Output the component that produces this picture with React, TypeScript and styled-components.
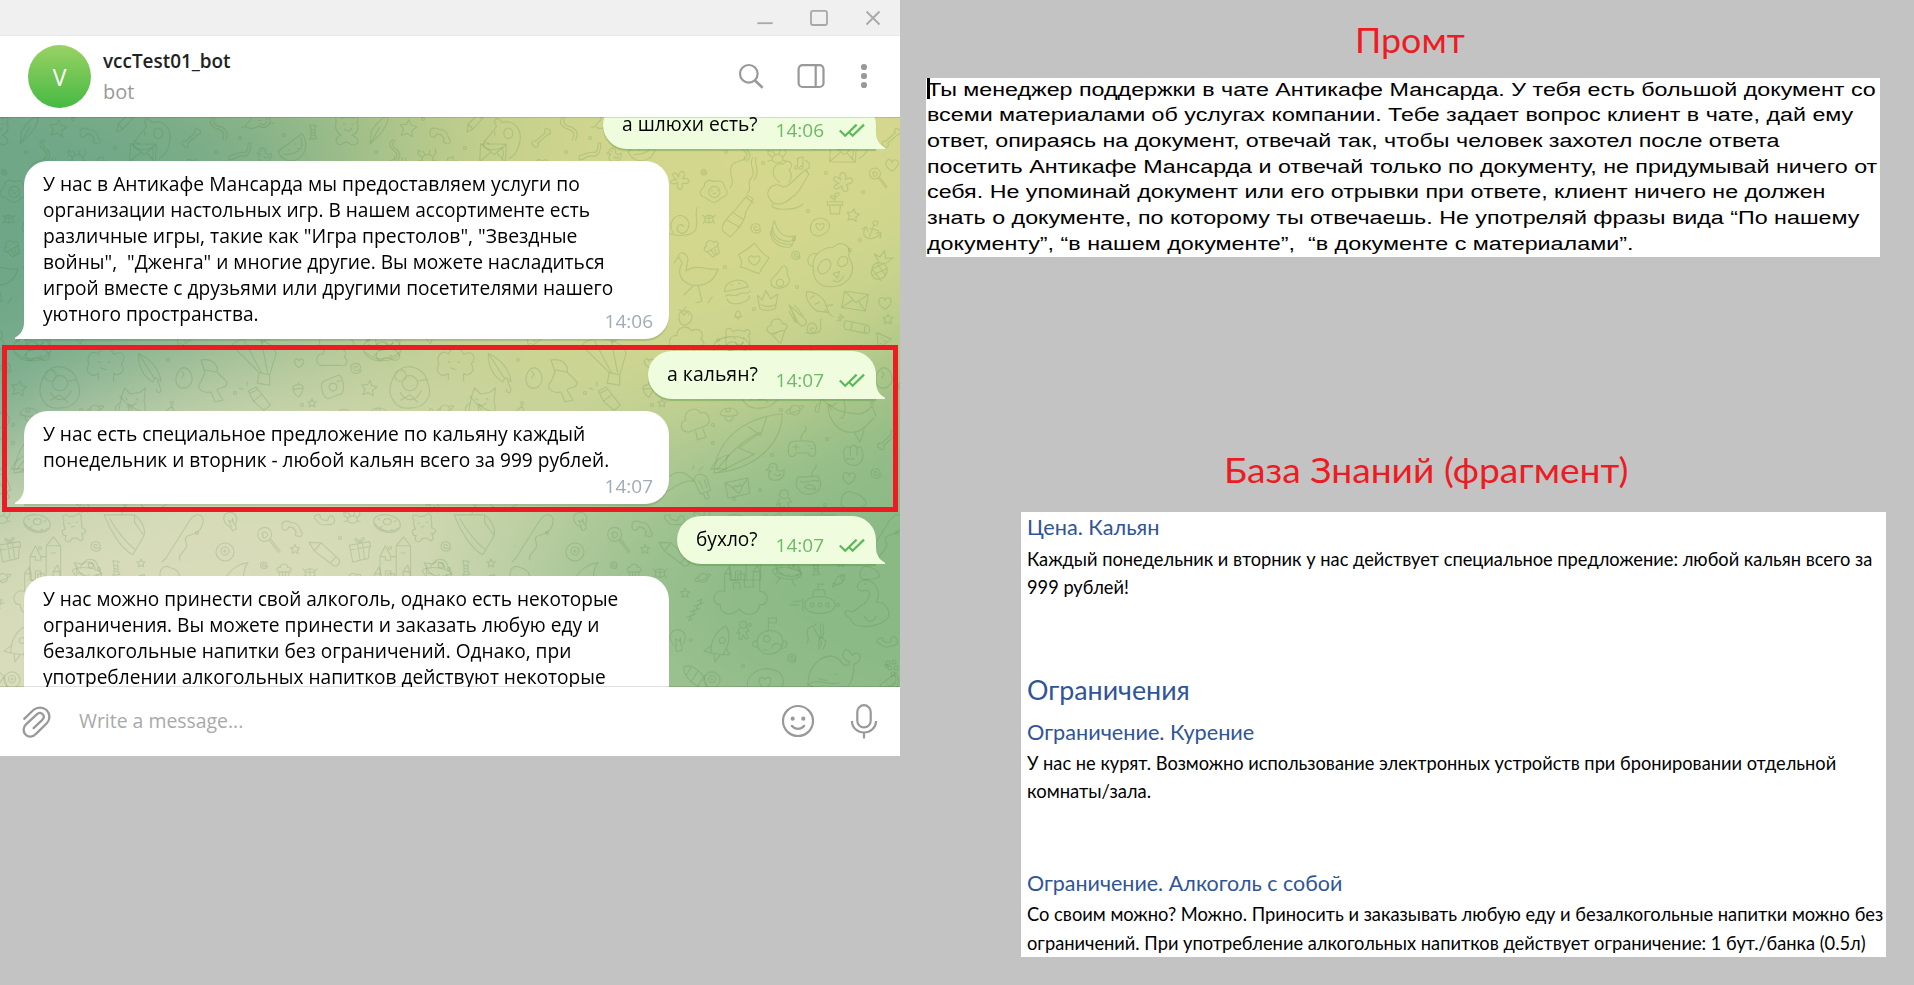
import React, { useEffect, useLayoutEffect, useRef, useState } from "react";
import styled, { createGlobalStyle } from "styled-components";

const GlobalStyle = createGlobalStyle`
  * { box-sizing: border-box; }
  html, body { margin: 0; padding: 0; background: #c3c3c3; }
  body { overflow: hidden; }
  p, h1, h2, h3 { margin: 0; font-weight: 400; }
`;

const UI_FONT = `"Open Sans", "Noto Sans", sans-serif`;
const DOC_FONT = `Lato, "Open Sans", sans-serif`;
const RED = "#ed1c24";

/* ---------- text line stretched to a known width ---------- */

const LineBox = styled.span`
  display: block;
  white-space: pre;
`;
const LineInner = styled.span`
  display: inline-block;
  transform-origin: 0 50%;
`;

function FitLine({ w, children }: { w: number; children: string }) {
  const ref = useRef<HTMLSpanElement>(null);
  const [k, setK] = useState(1);
  useLayoutEffect(() => {
    if (ref.current) setK(w / ref.current.offsetWidth);
  }, [w, children]);
  return (
    <LineBox>
      <LineInner ref={ref} style={{ transform: `scaleX(${k})` }}>
        {children}
      </LineInner>
    </LineBox>
  );
}

/* ---------- page ---------- */

const Board = styled.main`
  display: grid;
  grid-template-columns: 900px 1fr;
  align-items: start;
  width: 1914px;
  height: 985px;
  background: #c3c3c3;
  overflow: hidden;
`;

const Window = styled.section`
  position: relative;
  display: flex;
  flex-direction: column;
  width: 900px;
  height: 756px;
  background: #fff;
  font-family: ${UI_FONT};
  font-size: 20px;
`;

const TitleBar = styled.div`
  display: flex;
  justify-content: flex-end;
  height: 36px;
  background: #f0f0f0;
  border-bottom: 1px solid #e9e9e9;
`;

const Header = styled.header`
  display: flex;
  align-items: center;
  height: 81px;
  padding-left: 28px;
`;

const Avatar = styled.div`
  display: flex;
  align-items: center;
  justify-content: center;
  width: 63px;
  height: 63px;
  border-radius: 50%;
  background: linear-gradient(#9ad164, #46ba43);
  color: #fff;
  font-size: 23px;
  line-height: 30px;
`;

const Who = styled.div`
  flex: 1;
  padding-left: 12px;
`;
const Name = styled.div`
  height: 31px;
  line-height: 26px;
  font-weight: 600;
  font-size: 19.5px;
  color: #222;
`;
const Status = styled.div`
  line-height: 26px;
  color: #999;
`;

/* ---------- chat ---------- */

const Chat = styled.div`
  position: relative;
  height: 570px;
  overflow: hidden;
  &::before, &::after {
    content: "";
    position: absolute;
    z-index: 2;
    left: 0;
    right: 0;
    height: 1px;
    background: rgba(0, 0, 0, 0.12);
  }
  &::before { top: 0; }
  &::after { bottom: 0; }
`;

const Backdrop = styled.div`
  position: absolute;
  inset: 0;
  canvas, svg {
    position: absolute;
    left: 0;
    top: 0;
    width: 900px;
    height: 570px;
  }
`;

const Messages = styled.div`
  position: relative;
  display: flex;
  flex-direction: column;
  gap: 12px;
  margin-top: -16px;
  padding: 0 24px;
`;

const Incoming = styled.div<{ $h: number }>`
  position: relative;
  display: flex;
  flex-direction: column;
  flex-shrink: 0;
  width: 645px;
  height: ${(p) => p.$h}px;
  padding: 10px 16px 0 18.5px;
  background: #fff;
  border-radius: 24px 24px 24px 0;
  box-shadow: 0 2px 1px rgba(70, 110, 70, 0.22);
  color: #000;
  line-height: 26px;
`;

const Outgoing = styled.div<{ $w: number }>`
  position: relative;
  display: flex;
  align-self: flex-end;
  justify-content: space-between;
  flex-shrink: 0;
  width: ${(p) => p.$w}px;
  height: 48px;
  padding: 10px 11px 0 18.5px;
  background: #effdde;
  border-radius: 24px 24px 0 24px;
  box-shadow: 0 2px 1px rgba(80, 150, 60, 0.4);
  color: #000;
  line-height: 26px;
`;

const Meta = styled.div<{ $lift: number }>`
  align-self: flex-end;
  margin-top: ${(p) => p.$lift}px;
  color: #a0acb6;
  font-size: 19px;
  line-height: 24px;
`;

const OutMeta = styled.div`
  display: flex;
  gap: 15px;
  padding-top: 7px;
  color: #6cb968;
  font-size: 19px;
  line-height: 24px;
`;

const TailSvg = styled.svg<{ $side: "left" | "right" }>`
  position: absolute;
  bottom: 0;
  ${(p) => p.$side}: -9px;
  transform: ${(p) => (p.$side === "right" ? "scaleX(-1)" : "none")};
`;

const Tail = ({ side, fill }: { side: "left" | "right"; fill: string }) => (
  <TailSvg $side={side} width="10" height="22" viewBox="0 0 10 22" fill={fill}>
    <path d="M9 0h1v22H0v-1.2C6.500 17 9 12 9 5z" />
  </TailSvg>
);

const Checks = () => (
  <svg width="26" height="24" viewBox="0 0 26 24" fill="none" stroke="#5cb85a" strokeWidth="2.2">
    <path d="M.8 12.500l5.400 5.200L17.600 6.600M10.600 14.800l3 2.900L25 6.600" />
  </svg>
);

const Highlight = styled.div`
  position: absolute;
  z-index: 3;
  left: 2px;
  top: 345px;
  width: 896px;
  height: 167px;
  border: 5px solid ${RED};
`;

const Composer = styled.footer`
  display: flex;
  align-items: center;
  height: 69px;
`;
const Placeholder = styled.div`
  flex: 1;
  padding: 0 0 2px 25px;
  line-height: 26px;
  color: #a9a9a9;
`;

/* ---------- wallpaper ---------- */

const WALL = [
  { rgb: [219, 221, 187], x: 0.35, y: 0.75 },
  { rgb: [107, 165, 135], x: 0.2, y: 0.1 },
  { rgb: [213, 216, 141], x: 0.65, y: 0.25 },
  { rgb: [136, 184, 132], x: 0.8, y: 0.9 },
];

function Gradient() {
  const ref = useRef<HTMLCanvasElement>(null);
  useEffect(() => {
    const c = ref.current!;
    const g = c.getContext("2d")!;
    const W = c.width;
    const H = c.height;
    const img = g.createImageData(W, H);
    for (let j = 0; j < H; j++) {
      for (let i = 0; i < W; i++) {
        const cx = i / W - 0.5;
        const cy = j / H - 0.5;
        const swirl = 0.35 * Math.hypot(cx, cy);
        const t = swirl * swirl * 6.4;
        const px = Math.min(1, Math.max(0, 0.5 + cx * Math.cos(t) - cy * Math.sin(t)));
        const py = Math.min(1, Math.max(0, 0.5 + cx * Math.sin(t) + cy * Math.cos(t)));
        let sum = 0;
        const out = [0, 0, 0];
        WALL.forEach((p) => {
          const d = Math.max(0, 0.9 - Math.hypot(px - p.x, py - p.y)) ** 4;
          sum += d;
          p.rgb.forEach((v, n) => (out[n] += v * d));
        });
        const o = (j * W + i) * 4;
        for (let n = 0; n < 3; n++) img.data[o + n] = out[n] / sum;
        img.data[o + 3] = 255;
      }
    }
    g.putImageData(img, 0, 0);
  }, []);
  return <canvas ref={ref} width={450} height={285} />;
}

/* Doodle outlines, each drawn around 0,0 within roughly 10 units */
const SHAPES: Record<string, string> = {
  star: "M0-9L2.500-3.500 9-2.500 4.500 2 6 8.500 0 5.500-6 8.500-4.500 2-9-2.500-2.500-3.500z",
  dot: "M-2 0a2 2 0 1 0 4 0a2 2 0 1 0-4 0",
  heart: "M0 8C-9 2-9-3-6-6C-3-8 0-6 0-3C0-6 4-8 7-5C9-2 7 3 0 8z",
  spiral: "M7 3C4 10-7 8-7 0C-7-8 5-8 6-1C6 5-3 5-3 0C-3-3 2-3 2 0",
  bone: "M-5 3L4-5C2-9 6-10 7-8C10-8 10-4 6-3L-3 5C-1 9-6 10-7 7C-10 7-9 2-5 3z",
  boomerang: "M-9-1C-10-7-4-7-1-5C4-5 7-2 8 3C11 5 8 10 5 7C2 8 3 4 4 4C2-1-1-1-3-1C-4 3-9 3-9-1z",
  pencil: "M-8 10L-7 2 5-9C8-10 10-7 9-5L-2 7zM-7 2L-2 7M3-7L7-3",
  leaf: "M-5 10L-4 1C0-6 4-9 8-10C8-3 3 3-5 10L2-2",
  dog: "M-10 3C-7-1-5-3-3-6C-6-10-2-12 0-8C6-10 11-5 10 2C9 8 6 11 4 12M-10 3C-12 7-5 8 0 6M1-2a2.500 3 0 1 0 5 0a2.500 3 0 1 0-5 0M-10 2L-7 4M-4-3L-4-1M0 6C1 8 1 10 0 12",
  envelope: "M-9-5L8-7 9 5-8 7zM-9-5L1 1 8-7M-8 7L-2 0M9 5L3 0",
  loveletter: "M-9-6L9-6 8 6-9 6zM-9-6L-3 0M9-6L3 0M0 4C-5 0-3-4 0-1C3-4 5 0 0 4",
  snake: "M-6-10C-10-5-7-1-1 1C6 3 5 7 3 11M-4-10C-6-5-4-2 2-1C9 2 8 7 6 11",
  worm: "M-9 8C-5 9-3 4 2 5C7 6 9 1 9-6M-9 5C-5 4-1 1 4 2C7 2 6-2 7-6L9-6M-9 8V5",
  cat: "M-11-7C-5-3-2 0-6 2C-12 7-3 8 1 5C5 8 11 4 9-1L10-6 6-3C3-4 1-4-1-2L-4-6M1 1l2 0M6 0l2 0M2 3C4 5 6 4 7 2M-8 5L-11 6M9 3l3 0",
  melon: "M-10 3L6-9C11-2 8 7 1 9C-3 10-8 8-10 3zM5-6C8 0 4 5-6 5M-3 2l1 0M1-2l1 0M3 1l1 0",
  candy: "M-4-9L4-8 2-5 3 5 5 8-4 9-2 5-3-5zM-3-4L3-2M-3 0L3 2M-3 3L2 5",
  bear: "M-9-6C-11-11-5-12-4-8C0-10 3-9 5-8C8-12 11-7 8-5C11 1 8 5 4 6C12 9 9 15 4 14C0 11-2 11-5 14C-11 14-10 7-5 6C-10 3-10-1-9-6zM-3-3l1 0M4-3l1 0M-2 1C0 3 3 3 4 0",
  crab: "M-5 2C-3-4 5-4 6 2C5 7-4 7-5 2zM-5 0L-9-3-9-7-6-5M6 0L9-4 8-8M-5 3L-9 4M6 3L9 4M-2-2L-4-6M2-2L3-7",
  duck: "M-9-2L-6-4C-6-10 2-10 2-5C1-1 4 0 9-2C10 7 3 9-2 8C-8 7-7 0-4-1zM-9-2L-5-1M-3-5l1 0M0 2C2 5 4 4 6 2",
  smoke: "M-8 10C-4 4-10 2-7-4C-5-8 2-6 1-10M6-9C3-3 9-1 5 4C2 8 6 10 3 13M8-9C7-4 11-1 7 5",
  lute: "M-9 6C-11 2-7-2-3 0C0 2 3-3 9-8L11-6C7 0 6 4 2 6C-2 10-7 10-9 6zM-4-2C-9-6-7-12-2-11C1-14 4-11 1-8C3-6 2-3 1-2M-7 9C-10 12 4 13 8 9",
  notes: "M-5-5L1-7V4C-2 2-5 7-1 7C2 7 1 4 1 4M-5-5V4C-9 2-9 7-6 7C-4 7-5 4-5 4M4-3l4 3V6C4 5 4 9 6 9",
  flower: "M-2-2C-5-10 4-10 2-2C9-6 11 1 3 2C7 9-1 11-1 3C-7 9-11 3-3 1C-11-1-8-8-2-2z",
  pot: "M-7-2H7V1H-7zM-5 1L-4 9H4L5 1M0-2V-9C4-12 6-9 0-6C-5-10-6-6 0-4",
  lollipop: "M-6-4a5 5 0 1 0 10 0a5 5 0 1 0-10 0M2 0L9 9M3-1L10 8M-3-4C-3-7 2-6 1-3C-1 0-3-2-2-4",
  egg: "M-8 3C-12-2-5-2-6-6C-3-11 0-6 4-8C9-8 7-3 10-1C11 4 6 3 4 6C-1 10-3 4-8 3zM-3 0a4 4 0 1 0 8 0a4 4 0 1 0-8 0M-1-1l.5 0M3-1l.5 0M0 1L2 1",
  bottle: "M-8 8C-10 4-3-1 0-5L5-11 8-9 4-2C4 3-1 8-4 11zM-6 2L1 6M-3-2L3 2M4-10L8-7",
  banana: "M-6-9C-4 1 2 4 9 2C9 7-1 8-6 1C-8-3-8-6-6-9zM-7-6C-10 0-7 9 7 8L8 4M-9-1C-9 6-3 11 5 10L7 8",
  ring: "M-8 1C-8-9 6-10 8-2C9 6-7 13-8 1zM0 3C-5 0-4-5 0-2C4-5 5 0 0 3",
  anchor: "M-1-6a2 2 0 1 0 4 0a2 2 0 1 0-4 0M0-4L-2 6M-7 0C-9 9 0 10 6 3M-9 1L-6-2-4 2M3 2L7 1 7 6M-3-1L5 0",
  bug: "M-6 0C-6-7 6-7 6 0C6 7-6 7-6 0zM0-6V6M-6-1H6M-6-3L-9-5M6-3L9-5M-6 3L-8 6M6 3L8 6",
  cupcake: "M-6 1L-4 8H4L6 1zM-6 1C-10-2-6-5-4-4C-4-9 4-9 4-4C8-5 9-1 6 1M-2 1L-1 8M2 1L1 8",
  pillow: "M-9-3C-5-5-1-8 1-10C3-7 6-3 10-1C8 3 5 6 4 9C-1 8-5 5-8 5C-6 2-8 0-9-3zM1 4C-5 1-3-4 1-1C5-4 6 1 1 4",
  panda: "M-9 1C-10-6-4-9 0-9C4-13 9-9 7-5C12 3 6 9-1 9C-6 9-9 6-9 1zM-9 0C-13-1-12-7-7-6M-7 1C-6-4-1-5-1-1C-2 3-6 5-7 1zM3-4C5-6 8-4 6-1C3 1 1-1 3-4zM0 3L3 2 2 5zM0 6C2 8 4 6 5 4",
  pineapple: "M-5 1C-5-5 5-5 5 1C6 9-6 11-5 1zM-2-4L-6-8-2-7 0-12 2-7 7-9 3-4M-5 2L3 8M-3-3L5 4M5-1L-4 6M2-4L-5 2",
  flamingo: "M-8-9C-11-12-5-14-4-9L-5-3C0-7 7-3 11-4C9 3 3 5-2 4C-9 2-9-3-7-7zM1 4L3 12M-1 4L-6 9M3 12L0 13M8 10L6 13M-9-10L-11-7",
  burger: "M-8-2C-8-10 7-11 8-3zM-8 1C-4-1-2 3 1 1C4-1 6 3 9 0M-7 3C-7 9 8 8 8 3M-3-6l1 0M2-6l1 0",
  avocado: "M4-10C8-8 4-3 8 1C8 8-3 11-7 6C-10 0-3-1 0-7C1-9 2-10 4-10zM-3 4a3 3 0 1 0 6 0a3 3 0 1 0-6 0",
  crown: "M-8-4L-4 0-1-8 3-1 9-5 7 7C2 9-3 9-6 7zM-5 4C-1 6 3 6 7 4",
  carrot: "M9 8L0 7C-6 3-9-3-8-8C-2-8 6-4 7 3zM7 3L12 2M6 6L12 11M-5-3L-2-5M-2 2L2 0",
  comet: "M-10-10L5 3C8 8 2 11-1 7zM-10-10L-4 4-1 7M-5-10L3 0M-10-4L-4 6",
  berry: "M-6-1C-7-8 6-8 7-1C8 4 2 9-2 8C-5 7-6 3-6-1zM-4-5L-1-2 2-6 4-2M-6-7L-2-6 1-10",
  bell: "M-6 3C-3 1-5-6 0-7C5-6 3 1 6 3zM-2 3C-2 7 2 7 2 3M-6 3L6 3",
  icecream: "M-5 2L1 11 6 1M-5 2C-10-1-6-5-4-4C-4-10 5-10 5-4C9-4 9 0 6 1zM-3 3L3 1",
  snail: "M-8 6C-3 8 5 8 8 4C10-1 7-6 9-9M-5 6C-9 0-4-6 1-4C7 0 3 7-1 6C-5 3-1-1 1 2",
  cracker: "M-8-3L6 0C9 0 9 6 6 6L-9 3C-11 1-10-3-8-3M-4-2L-5 3M-10-5L-13-8M-12-3L-15-3M6 0C4 2 4 5 6 6",
  cloud: "M-9 6C-14 3-11-3-7-2C-7-8 0-9 2-5C7-8 11-3 8 0C12 3 9 7 6 6z",
  pizza: "M-7-8L9-1-5 9zM-5-8C-2-5 4-4 9-1M-2-2l1 0M1 1l1 0M-3 4l1 0",
  sheep: "M-9 0C-11-5-6-8-4-5C-3-9 3-9 4-5C9-8 11-3 8 0C11 4 6 7 4 5L4 9M-4 8V5C-9 8-11 3-9 0M-4-1l1 0M1-1l1 0M-3 2L0 3",
  umbrella: "M-9-9C-2-7 6-2 8 6L4 4 3 7C-3 5-8-1-9-9zM6 6L9 11C9 14 6 13 6 11M-9-9L3 4",
  oval: "M-7 1C-7-5-3-9 0-9C5-8 7-3 7 2C6 7 2 9-1 9C-5 8-7 5-7 1zM-2-6L0-3-2 0",
  squirrel: "M-6-10C0-11 3-7 2-4L7 1C7 5 3 3 2 5L5 10 1 11-1 6C-6 7-9 3-6 1L-4-4zM-4-5L2-4",
  balloon: "M-11-7C-6-13 9-10 10-3L7 7 2 6-11-7M-5-9L3 6M3-9L6 6M2 6L1 11 7 12 7 7",
  torch: "M-9-7L-3-10 1-5 8 4 3 8-5 1zM-8-5L-2-8M-5 1L1-4M-10-11l0-3M-13-8l-3-1",
  acorn: "M-6-1C-6-7 6-8 6-2zM-5-1C-5 6 1 8 1 8C4 4 6 2 5-2M0-6L1-9",
  fox: "M-9 8L-7-2-5-8-1-4 5-5 9-8 8 1C10 6 8 10 7 12M-4-1L-3 0M3-1L4 0M-2 3L0 4 3 2M-9 8C-12 9-12 4-8 2",
  parrot: "M-10 5C-12-1-8-8-4-10C1-12 8-9 9-3C13 5 7 11 1 11C-6 12-8 9-10 5zM-4-2a4 4 0 1 0 8 0a4 4 0 1 0-8 0M-8-6a3 3 0 1 0 6 0a3 3 0 1 0-6 0M4-3L9-4M-5 3C-2 8 3 8 6 2M-5 7L0 4 4 8",
  camera: "M-8-4L4-9C8-9 9 2 7 5L-4 9C-8 8-10-1-8-4zM-3 0a3 3 0 1 0 6 0a3 3 0 1 0-6 0M3-4l3-1",
  donut: "M-10 0C-10-7 9-9 10 0C11 8-9 10-10 0zM-3-1C-2-4 3-4 3-1C2 2-3 2-3-1M-7-2l1 1M6-3l-1 1M-4 4l1-1M4 4l1 0M-9 2C-4 7 5 7 9 2",
  tree: "M-2 5L-3 11H3L3 5M-7 4C-13 1-9-5-6-4C-6-11 5-11 5-5C10-6 11 2 6 4z",
  mushroom: "M-9-1C-8-9 8-9 9-1C6 2-6 2-9-1zM-4 1C-5 8 5 8 4 1M-3-5a2 2 0 1 0 4 0a2 2 0 1 0-4 0",
  surf: "M-11 9C-10-2-1-9 11-10C11-1 3 8-11 9zM-10 8C-5 1 1-3 4-4M6-9L4-3 0-6M4-4L-3 1 2 3-10 9",
  gamepad: "M-9 1C-9-5-5-4 0-4C5-4 9-5 9 1C10 9 5 6 4 4H-4C-5 7-10 8-9 1zM-6 0h4M-4-2v4M4-1l1 0M6 1l1 0M0-4C-3-9 5-10 2-14",
  narwhal: "M-10-9C-10 0-4 6 3 5C8 5 10 0 13-2M-10-9C-4-4 0-5 5-4C8-4 10-6 12-8M-8-6L-14-13M3 5L6 10 8 4M-4-2l1 0M12-8L14-3",
  fist: "M-7-4C-5-8-3-7-2-5C-1-9 2-8 3-5C5-8 7-6 7-3C9 2 6 8 1 8C-5 8-8 4-7-4zM-2-5V0M3-5V0M-5 3H1",
  pop: "M-7-4C-6-10 1-9 3-5L6 4-2 7zM0 6L2 11 5 10 3 5M-3-3L0 3M1-4L3 2M-8-12l1-3M-3-11l3-3",
  bowl: "M-8-4C-12 3-5 9 1 8C9 7 10 0 6-5zM-6-1C0 1 4-4 7-1M-3 3C0-1 4 2 5 5C2 3 0 6-3 3zM2-5C1-10 6-9 5-13",
  hat: "M-9 4C-6 7 7 6 9 3C8-1 4-4 0-5C-5-8-10-4-9 4z",
  astro: "M-4-7a4 4 0 1 0 8 0a4 4 0 1 0-8 0M-4-3L-7 3-3 1-5 9-1 9 0 4 3 9 6 8 3 1 7 0 4-4",
  dolphin: "M-10 4C-7-3 0-8 7-4C9-2 11-1 12 1C7 0 4 2 0 4C-3 5-6 9-10 8C-8 5-13 4-10 4z",
  teddy: "M-6-7C-9-11-3-12-2-9H3C5-12 9-9 7-6C8-2 6 0 7 1C11 3 9 6 6 5C8 11 4 12 2 8H-2C-5 12-9 9-6 5C-9 5-10 0-6 0C-7-3-7-5-6-7zM-3-4l1 0M3-4l1 0M-1-1L1-1",
  gift: "M-9-4L8-7 9-3-8 0zM-8 0L-6 10 7 7 8-3M-2-5L0 8M2-6L4 8M0-6C-7-8-4-12 0-7C2-13 7-10 0-6",
  castle: "M-10 10V-3H-7V-1H-4V-3H-1V10M-1 2V-9L3-14 7-9V10M-1-9H7M-10-3L-7-9-4-3M-7 10V5H-4V10M2-5h2M-10 10H7",
  boat: "M-12-9L4-9C7-7 10-2 9 2L3 12C-3 9-9-1-12-9zM-9-7C-5 0-1 5 4 9M9 2L4-5 4-9M-3-9L-1-13 6-11",
  rod: "M-8 12L4-7C8-12 12-9 10-4C8 2 0-1 2 4C4 8-3 10-1 13M-8 12L-10 14",
  ball: "M-9 0a9 9 0 1 0 18 0a9 9 0 1 0-18 0M-4-1a4 4 0 1 0 8 0a4 4 0 1 0-8 0M0-2a1 1 0 1 0 1 1",
  bulb: "M-2 5C-8 0-7-8 0-8C7-7 7 0 3 4L3 8-1 9zM-1 5L-2-1 1 1 2-2 2 4",
  rocket: "M-4 8C-7 0-4-8 1-12C6-7 6 0 4 7zM-1-2a2 2 0 1 0 4 0a2 2 0 1 0-4 0M-5 3L-9 8-4 8M5 2L8 6 4 7M-2 8L0 13 2 8",
  ship: "M-10-4L-3-3C0-9 7-7 8-2L11 4C5 8-3 7-6 3zM1-2a2 2 0 1 0 4 0a2 2 0 1 0-4 0M-8-2L-8 4-5 4",
  sail: "M-10 8C-6 0 1-7 10-8C6-3 6 3 7 9C1 7-4 7-10 8z",
  saturn: "M-5 0a5 5 0 1 0 10 0a5 5 0 1 0-10 0M-4-2C-12 2-10 6 0 2C8-1 12-5 5-4",
  fort: "M-9 3C-14 3-12-5-7-3V-11H-4V-8H-1V-11H2V-5H6V-12H9V-3C14-3 13 4 9 3C8 9 1 8 0 5C-5 9-9 7-9 3zM-7-11L-5-14-4-11M6-12L8-15 9-12M-3-4V-7H0V-4",
  ufo: "M-10 0C-7-4 6-5 10-1C8 5-7 6-10 0zM-5-2C-5-9 4-9 5-3M-4 4L-6 8M4 4L7 8M-4 1l1 0M1 1l1 0M6 0l1 0",
  sub: "M-7 0C-7-6 9-6 9 0C9 6-7 6-7 0zM-8-3V3M-3-4L-2-8H3L4-5M0-8V-11H3M-4 0a1 1 0 1 0 2 0a1 1 0 1 0-2 0M0 0a1 1 0 1 0 2 0a1 1 0 1 0-2 0M4 0a1 1 0 1 0 2 0a1 1 0 1 0-2 0M-10 0H-15M-9-2H-13",
  nessie: "M-1-1C2-4 3-7 0-8C-5-6-6-12-1-13C5-13 8-6 5-2C11-2 13 4 10 7C3 12-7 11-8 6C-12 4-11 1-7 3C-4 2-4 0-1-1zM-1-11l1 0M-1 5C1 9 4 8 5 5",
  fish: "M-5 5C-7-1-1-6 5-6C6 0 2 5-4 5L-8 8-8 3-5 5M3-4l.5 0M0-5L3 1",
  zzz: "M-8 8L-3 6-6 12-2 10M-4 2L1 0-2 6 2 4M0-4L5-6 2 0 7-2M4-10L9-12 6-6 11-8",
  planet: "M-8 1C-9-9 7-10 8-1C9 9-7 11-8 1zM-8-1C-13 0-11 4-8 3M8-1C12 0 11 4 7 4M-4-2a2 2 0 1 0 4 0a2 2 0 1 0-4 0M1 4C2-1 7 1 7 3M-4 5l2 0M-1-8V-15H4V-12H-1",
  whale: "M-12 8C-12-2-3-9 3-4C5-1 7 0 8-3C4-4 4-7 6-9C8-8 9-7 9-6C11-8 13-7 13-5C13-3 11-2 10-2C10 6 7 10 4 12M-12 8C-7 4-3 9 3 7M-12 8C-7 10-4 12-3 14M-7 5L-3 6M1 3l1 0M-7-9C-3-13-8-15-9-19M-5-9C-2-12-4-14-6-15",
  bee: "M-9-7C-3-10 7-3 8 8C1 9-9 0-9-7zM-3-8L-7-1M2-5L-4 4M6-1L1 7",
  cone: "M-9 4C-11-4-1-9 7-5C12-1 9 7 3 8C-3 6-6 6-9 4zM0 4C-5 1-3-4 0-1C3-4 5 1 0 4",
  grapes: "M-6-5a2 2 0 1 0 4 0a2 2 0 1 0-4 0M0-6a2 2 0 1 0 4 0a2 2 0 1 0-4 0M-4 0a2 2 0 1 0 4 0a2 2 0 1 0-4 0M2 0a2 2 0 1 0 4 0a2 2 0 1 0-4 0M-1 6a2 2 0 1 0 4 0a2 2 0 1 0-4 0",
};

/* shape, x, y, scale, rotation */
type Doodle = [string, number, number, number?, number?];
const DOODLES: Doodle[] = [
  ["bear", -3, 128, 1.2], ["leaf", 27, 130, 1.4], ["star", 58, 128, 0.95, 8], ["boomerang", 90, 135, 1.1], ["pencil", 125, 122, 1],
  ["dog", 152, 137, 1.8], ["bone", 191, 138, 1.05], ["snake", 219, 128, 1.1], ["cat", 257, 119, 1.4], ["melon", 293, 147, 1.5],
  ["candy", 313, 132, 0.8], ["snake", 45, 150, 0.9, 20], ["crab", 77, 157, 1], ["envelope", 143, 153, 1.5, 8], ["worm", 240, 150, 1.2],
  ["duck", 264, 155, 0.8], ["smoke", 43, 172, 1.6], ["lute", 87, 186, 2], ["notes", 102, 163, 0.9], ["flower", 143, 182, 1.2],
  ["pot", 135, 204, 1.1], ["lollipop", 176, 178, 1.1], ["heart", 192, 165, 0.8], ["flower", 330, 180, 1.1, 20], ["spiral", 4, 172, 0.4],
  ["egg", 13, 192, 1.4], ["bottle", 38, 216, 1.9], ["star", 153, 215, 0.7, 10], ["banana", 83, 233, 1.4], ["ring", 120, 227, 1.2],
  ["anchor", 173, 230, 1.2, 10], ["spiral", 56, 228, 0.7], ["bug", 9, 219, 0.7], ["snail", 332, 223, 1.7], ["cupcake", 12, 248, 1, -30],
  ["pillow", 53, 259, 1.6], ["spiral", 96, 255, 0.6], ["panda", 133, 267, 2.2], ["pineapple", 180, 268, 1.5, 15], ["flamingo", 346, 277, 2],
  ["burger", 37, 293, 1.5, -8], ["avocado", 80, 278, 1.2], ["crown", 67, 300, 1.2], ["carrot", 117, 302, 1.3], ["comet", 100, 316, 1.1],
  ["envelope", 155, 301, 1.4, 15], ["heart", 185, 303, 0.8], ["star", 188, 319, 0.55], ["berry", 335, 317, 1], ["bell", 38, 315, 0.6],
  ["icecream", 77, 330, 1.3, -10], ["snail", 113, 327, 0.9], ["cracker", 158, 325, 1.4], ["bear", 38, 342, 1.3], ["cloud", 338, 339, 1.6],
  ["pizza", 183, 340, 0.9], ["bone", 210, 330, 1], ["star", 240, 325, 0.8], ["fish", 270, 335, 1], ["donut", 32, 348, 1.9],
  ["sheep", 106, 364, 1.9], ["umbrella", 150, 370, 1.6, 10], ["oval", 184, 378, 1.15], ["squirrel", 213, 380, 2], ["balloon", 255, 360, 2.1],
  ["torch", 260, 400, 1.3], ["acorn", 298, 390, 0.9], ["fox", 132, 400, 1.5], ["star", 19, 388, 0.85, 8], ["parrot", 60, 387, 1.9],
  ["camera", 333, 387, 1.3], ["spiral", 6, 368, 0.75], ["star", 312, 403, 0.45], ["heart", 299, 363, 0.6], ["cloud", 333, 357, 1.4],
  ["saturn", 95, 410, 1], ["mushroom", 29, 415, 1], ["tree", 346, 423, 1.5, -20], ["surf", 48, 445, 3.1], ["gamepad", 102, 447, 1.5],
  ["narwhal", 148, 422, 2], ["bone", 187, 440, 1.1], ["fist", 153, 455, 1.3], ["duck", 75, 472, 1], ["pop", 3, 485, 1.3],
  ["loveletter", 38, 488, 1.3, -12], ["bowl", 109, 483, 1.4], ["heart", 149, 478, 0.8], ["spiral", 176, 473, 0.7], ["astro", 84, 502, 1.1],
  ["hat", 154, 500, 1.4], ["dolphin", 327, 480, 1.4], ["sail", 20, 462, 0.9], ["donut", 37, 523, 1.35, 12],
  ["teddy", 73, 528, 1.3, -8], ["gift", 10, 550, 1.2], ["castle", 48, 562, 1.8], ["spiral", 96, 546, 0.7], ["boat", 127, 532, 1.9],
  ["rod", 182, 534, 2], ["ball", 225, 552, 1], ["bulb", 231, 521, 1.1, -15], ["lollipop", 266, 540, 1.4], ["star", 295, 549, 0.5],
  ["boomerang", 292, 528, 1.1], ["boomerang", 325, 520, 1, 160], ["pencil", 325, 553, 1.5, 85], ["crab", 352, 518, 0.9], ["ship", 87, 568, 1.3],
  ["candy", 116, 568, 0.8], ["star", 141, 563, 0.45], ["cupcake", 284, 571, 0.9], ["sail", 235, 573, 1.3], ["spiral", 264, 565, 0.5],
  ["hat", 170, 573, 1.1], ["bug", 310, 573, 0.8], ["saturn", 3, 578, 0.9], ["fort", 40, 598, 2.2], ["ufo", 87, 573, 1.5, 10],
  ["sub", 118, 605, 1.9], ["nessie", 166, 606, 2], ["fish", 140, 580, 0.9], ["star", 335, 593, 0.5], ["zzz", 344, 610, 0.9],
  ["rocket", 20, 643, 1.5, 15], ["astro", 43, 631, 0.9], ["planet", 70, 642, 1.6], ["smoke", 115, 633, 1], ["whale", 133, 668, 2.1],
  ["spiral", 92, 658, 0.6], ["bee", 346, 677, 1.4], ["cone", 65, 681, 1.9], ["boomerang", 188, 642, 1, 150], ["grapes", 192, 668, 1],
  ["melon", 190, 682, 1], ["bulb", 328, 640, 1.3], ["ball", 12, 680, 0.9],
  ...([[73, 119], [115, 148], [26, 152], [216, 152], [240, 138], [284, 135], [126, 173], [163, 192], [63, 163], [108, 211], [160, 240],
    [94, 239], [25, 267], [97, 287], [150, 250], [54, 309], [140, 318], [18, 340], [168, 360], [172, 403], [235, 393], [302, 405], [127, 439],
    [81, 410], [13, 425], [72, 455], [60, 490], [34, 499], [125, 505], [197, 533], [40, 548], [50, 625], [138, 605], [99, 569], [341, 640],
    [43, 666], [186, 666], [340, 538], [13, 443]] as [number, number][]).map(([x, y]): Doodle => ["dot", x, y, 0.75]),
];

const Wallpaper = () => (
  <Backdrop aria-hidden>
    <Gradient />
    <svg viewBox="0 117 900 570" fill="none" stroke="#3c6e2d" strokeOpacity=".17" strokeWidth="1.1" strokeLinecap="round" strokeLinejoin="round">
      {[-350, 0, 350, 700].map((dx) =>
        DOODLES.map(([name, x, y, s = 1, r = 0], i) => (
          <path
            key={`${dx}-${i}`}
            d={SHAPES[name]}
            vectorEffect="non-scaling-stroke"
            transform={`translate(${x + dx} ${y}) rotate(${r}) scale(${s})`}
          />
        ))
      )}
    </svg>
  </Backdrop>
);

/* ---------- icons ---------- */

const WindowButtons = () => (
  <svg width="150" height="35" viewBox="750 0 150 35" fill="none" stroke="#a8a8a8" strokeWidth="1.8">
    <path d="M757.300 23.200h15.400" />
    <rect x="811" y="10.800" width="16" height="14.200" rx="2" />
    <path d="M866.500 11.500l13 13M879.500 11.500l-13 13" />
  </svg>
);

const HeaderIcons = () => (
  <svg width="170" height="81" viewBox="730 36 170 81" fill="none" stroke="#999" strokeWidth="2.200">
    <circle cx="748.800" cy="73.800" r="8.800" />
    <path d="M755 80.500l7.600 7.200" strokeWidth="2.600" />
    <rect x="798.600" y="65.200" width="24.900" height="21.800" rx="4" />
    <path d="M815.700 65.500v21.500" />
    <g fill="#999" stroke="none">
      <circle cx="864" cy="67" r="3.100" />
      <circle cx="864" cy="76" r="3.100" />
      <circle cx="864" cy="85" r="3.100" />
    </g>
  </svg>
);

const ClipIcon = () => (
  <svg width="54" height="69" viewBox="0 687 54 69" fill="none" stroke="#999" strokeWidth="2.300" strokeLinecap="round" strokeLinejoin="round">
    <path d="M24.200 718.800L33.400 710C37 706.700 43 706.700 46.500 710C50.300 713.700 50.300 719.500 47 723L36.300 733.600C33 737.500 28.500 737.500 25.700 734.700C22.800 732 22.900 727.500 26 724.300L36.800 714.300C38.800 712.500 41.300 712.700 42.700 714.200C44.200 715.800 44 718 42.300 719.800L33.600 728.200" />
  </svg>
);

const InputIcons = () => (
  <svg width="120" height="69" viewBox="780 687 120 69" fill="none" stroke="#999" strokeWidth="2.200">
    <circle cx="798" cy="721" r="15" />
    <g fill="#999" stroke="none">
      <circle cx="792.700" cy="718.700" r="2.100" />
      <circle cx="803.300" cy="718.700" r="2.100" />
    </g>
    <path d="M791.800 725.800C795 729.800 801 729.800 804.200 725.800" strokeLinecap="round" />
    <rect x="857.300" y="705.200" width="13.400" height="22.200" rx="6.700" />
    <path d="M852 721v.5a12 11 0 0 0 24 0V721M864 732.500v6" />
  </svg>
);

/* ---------- right side ---------- */

const Notes = styled.section`
  display: flex;
  flex-direction: column;
  padding: 20px 0 0 26px;
`;

const Title = styled.h1<{ $left: number; $gap?: number }>`
  height: 40px;
  margin: ${(p) => p.$gap ?? 0}px 0 0 ${(p) => p.$left}px;
  font: 34.5px/40px ${DOC_FONT};
  color: ${RED};
`;

const PromptPanel = styled.div`
  position: relative;
  display: flex;
  flex-direction: column;
  width: 954px;
  height: 179px;
  margin-top: 18px;
  padding-left: 1px;
  background: #fff;
`;
const PromptText = styled.p`
  margin-top: -1.200px;
  font: 18.8px/25.65px "Liberation Sans", Arial, sans-serif;
  color: #000;
`;
const Caret = styled.i`
  position: absolute;
  left: 1px;
  top: 0;
  width: 2.500px;
  height: 21px;
  background: #000;
`;

const DocPanel = styled.article`
  width: 865px;
  height: 445px;
  margin: 22px 0 0 95px;
  padding: 1px 0 0 5.500px;
  background: #fff;
  font-family: ${DOC_FONT};
`;
const DocHeading = styled.h2<{ $gap?: number }>`
  margin-top: ${(p) => p.$gap ?? 0}px;
  font-size: 26.4px;
  line-height: 36px;
  color: #2f5597;
`;
const DocSub = styled.h3<{ $gap?: number }>`
  margin-top: ${(p) => p.$gap ?? 0}px;
  font-size: 21.2px;
  line-height: 28px;
  color: #2f5597;
`;
const DocText = styled.p<{ $gap: number }>`
  margin-top: ${(p) => p.$gap}px;
  font-size: 18.6px;
  line-height: 28.3px;
  color: #000;
`;

type Line = [string, number];
const Lines = ({ items }: { items: Line[] }) => (
  <>
    {items.map(([text, w]) => (
      <FitLine key={text} w={w}>
        {text}
      </FitLine>
    ))}
  </>
);

const GAMES: Line[] = [
  ["У нас в Антикафе Мансарда мы предоставляем услуги по", 537],
  ["организации настольных игр. В нашем ассортименте есть", 547],
  ['различные игры, такие как "Игра престолов", "Звездные', 534],
  ['войны",  "Дженга" и многие другие. Вы можете насладиться', 562],
  ["игрой вместе с друзьями или другими посетителями нашего", 570],
  ["уютного пространства.", 215.5],
];
const HOOKAH: Line[] = [
  ["У нас есть специальное предложение по кальяну каждый", 542.5],
  ["понедельник и вторник - любой кальян всего за 999 рублей.", 566.5],
];
const DRINKS: Line[] = [
  ["У нас можно принести свой алкоголь, однако есть некоторые", 575],
  ["ограничения. Вы можете принести и заказать любую еду и", 556],
  ["безалкогольные напитки без ограничений. Однако, при", 528.5],
  ["употреблении алкогольных напитков действуют некоторые", 563],
];
const PROMPT: Line[] = [
  ["Ты менеджер поддержки в чате Антикафе Мансарда. У тебя есть большой документ со", 948.5],
  ["всеми материалами об услугах компании. Тебе задает вопрос клиент в чате, дай ему", 926],
  ["ответ, опираясь на документ, отвечай так, чтобы человек захотел после ответа", 852],
  ["посетить Антикафе Мансарда и отвечай только по документу, не придумывай ничего от", 950.5],
  ["себя. Не упоминай документ или его отрывки при ответе, клиент ничего не должен", 898],
  ["знать о документе, по которому ты отвечаешь. Не употреляй фразы вида “По нашему", 932.5],
  ["документу”, “в нашем документе”,  “в документе с материалами”.", 706],
];

const Sent = ({ w, text, tw, time }: { w: number; text: string; tw: number; time: string }) => (
  <Outgoing $w={w}>
    <FitLine w={tw}>{text}</FitLine>
    <OutMeta>
      <span>{time}</span>
      <Checks />
    </OutMeta>
    <Tail side="right" fill="#effdde" />
  </Outgoing>
);

export default function App() {
  return (
    <Board>
      <GlobalStyle />
      <Window>
        <TitleBar>
          <WindowButtons />
        </TitleBar>
        <Header>
          <Avatar>V</Avatar>
          <Who>
            <Name>
              <FitLine w={128}>vccTest01_bot</FitLine>
            </Name>
            <Status>bot</Status>
          </Who>
          <HeaderIcons />
        </Header>
        <Chat>
          <Wallpaper />
          <Messages>
            <Sent w={273} text="а шлюхи есть?" tw={135.5} time="14:06" />
            <Incoming $h={178}>
              <Lines items={GAMES} />
              <Meta $lift={-18.4}>14:06</Meta>
              <Tail side="left" fill="#fff" />
            </Incoming>
            <Sent w={228} text="а кальян?" tw={90.5} time="14:07" />
            <Incoming $h={93}>
              <Lines items={HOOKAH} />
              <Meta $lift={0.6}>14:07</Meta>
              <Tail side="left" fill="#fff" />
            </Incoming>
            <Sent w={199} text="бухло?" tw={62} time="14:07" />
            <Incoming $h={178}>
              <Lines items={DRINKS} />
            </Incoming>
          </Messages>
        </Chat>
        <Composer>
          <ClipIcon />
          <Placeholder>
            <FitLine w={164}>Write a message...</FitLine>
          </Placeholder>
          <InputIcons />
        </Composer>
        <Highlight />
      </Window>

      <Notes>
        <Title $left={429}>
          <FitLine w={110}>Промт</FitLine>
        </Title>
        <PromptPanel>
          <PromptText>
            <Lines items={PROMPT} />
          </PromptText>
          <Caret />
        </PromptPanel>
        <Title $left={298} $gap={193}>
          <FitLine w={404.5}>База Знаний (фрагмент)</FitLine>
        </Title>
        <DocPanel>
          <DocSub>
            <FitLine w={132}>Цена. Кальян</FitLine>
          </DocSub>
          <DocText $gap={3.5}>
            <Lines
              items={[
                ["Каждый понедельник и вторник у нас действует специальное предложение: любой кальян всего за", 845.5],
                ["999 рублей!", 102],
              ]}
            />
          </DocText>
          <DocHeading $gap={71.4}>
            <FitLine w={162.5}>Ограничения</FitLine>
          </DocHeading>
          <DocSub $gap={9.5}>
            <FitLine w={227}>Ограничение. Курение</FitLine>
          </DocSub>
          <DocText $gap={3}>
            <Lines
              items={[
                ["У нас не курят. Возможно использование электронных устройств при бронировании отдельной", 809.5],
                ["комнаты/зала.", 124],
              ]}
            />
          </DocText>
          <DocSub $gap={63.4}>
            <FitLine w={315}>Ограничение. Алкоголь с собой</FitLine>
          </DocSub>
          <DocText $gap={3.5}>
            <Lines
              items={[
                ["Со своим можно? Можно. Приносить и заказывать любую еду и безалкогольные напитки можно без", 856.5],
                ["ограничений. При употребление алкогольных напитков действует ограничение: 1 бут./банка (0.5л)", 839],
              ]}
            />
          </DocText>
        </DocPanel>
      </Notes>
    </Board>
  );
}
